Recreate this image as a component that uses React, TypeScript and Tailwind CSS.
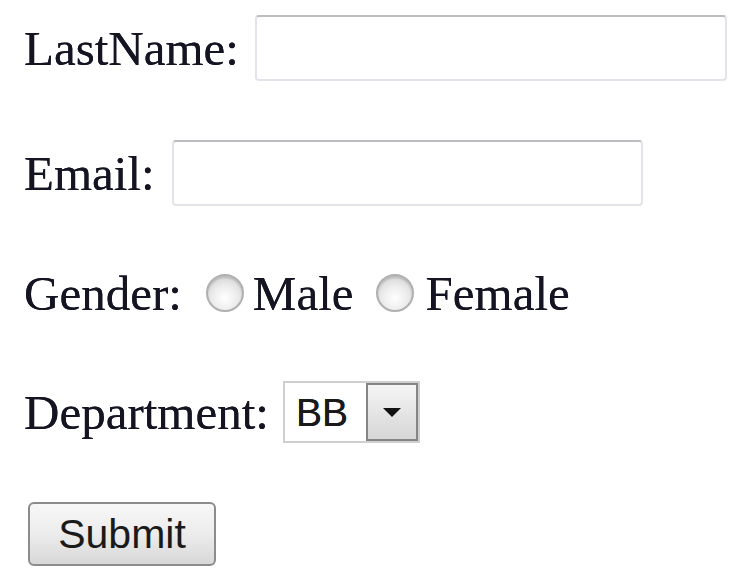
import React from "react";

const serif = "font-['Liberation_Serif','Times_New_Roman',serif]";
const sans = "font-['Liberation_Sans',Arial,sans-serif]";

function TextBox({ width }: { width: string }) {
  return (
    <input
      type="text"
      className={`${width} h-[66px] rounded-[4px] border-2 border-[#e3e4ea] border-t-[#bcbcc1] bg-white outline-none`}
    />
  );
}

function Radio() {
  return (
    <span className="inline-block w-[38px] h-[38px] rounded-full border-2 border-[#b0b0b0] bg-[radial-gradient(circle_at_50%_65%,#ffffff_0%,#ececec_45%,#c9c9c9_100%)] shadow-[inset_0_2px_2px_rgba(0,0,0,0.15)]" />
  );
}

export default function App() {
  return (
    <div className={`w-[756px] h-[588px] bg-white pl-[24px] text-[49px] leading-none text-[#141422] [text-shadow:0_0_0.6px_#141422] ${serif}`}>
      <form className="flex flex-col" onSubmit={(e) => e.preventDefault()}>
        <div className="flex items-center h-[66px] mt-[15px]">
          <span>LastName:</span>
          <span className="ml-[16px]">
            <TextBox width="w-[472px]" />
          </span>
        </div>

        <div className="flex items-center h-[66px] mt-[59px]">
          <span>Email:</span>
          <span className="ml-[17px]">
            <TextBox width="w-[471px]" />
          </span>
        </div>

        <div className="flex items-center h-[66px] mt-[54px]">
          <span>Gender:</span>
          <span className="ml-[24px] flex items-center">
            <Radio />
          </span>
          <span className="ml-[9px]">Male</span>
          <span className="ml-[22px] flex items-center">
            <Radio />
          </span>
          <span className="ml-[12px]">Female</span>
        </div>

        <div className="flex items-center h-[66px] mt-[53px]">
          <span>Department:</span>
          <div className="ml-[14px] flex h-[62px] w-[137px] border-2 border-[#cfcfd2] bg-white">
            <span className={`flex-1 flex items-center pl-[11px] text-[39px] text-[#1a1a1a] ${sans}`}>BB</span>
            <span className="w-[52px] h-full flex items-center justify-center border-2 border-[#858585] bg-gradient-to-b from-[#f5f5f5] to-[#d6d6d6]">
              <svg width="18" height="9" viewBox="0 0 18 9">
                <path d="M0 0 L18 0 L9 9 Z" fill="#111" />
              </svg>
            </span>
          </div>
        </div>

        <div className="flex items-center h-[66px] mt-[56px]">
          <button
            type="submit"
            className={`ml-[4px] w-[188px] h-[64px] rounded-[6px] border-2 border-[#8c8c8c] bg-gradient-to-b from-[#f7f7f7] via-[#ececec] to-[#d8d8d8] text-[41px] text-[#1a1a1a] ${sans}`}
          >
            Submit
          </button>
        </div>
      </form>
    </div>
  );
}
